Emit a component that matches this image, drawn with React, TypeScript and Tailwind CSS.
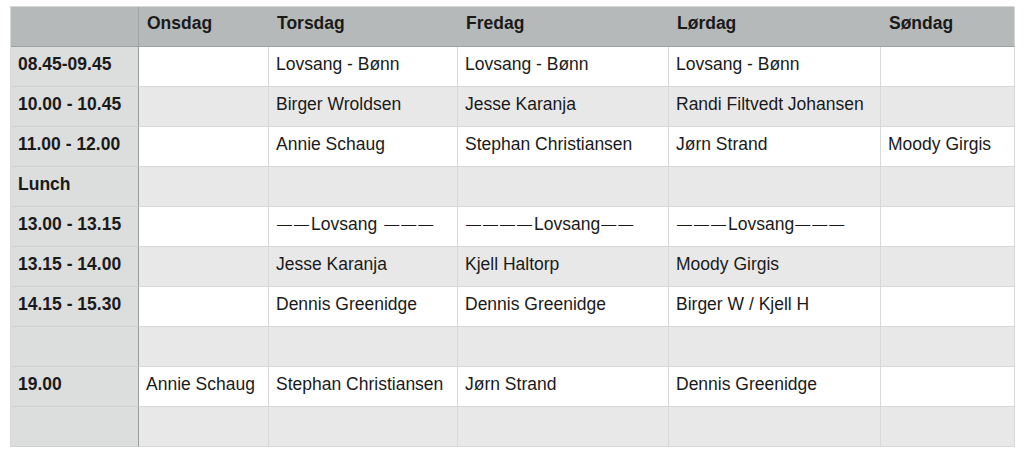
import React from "react";

const days = ["Onsdag", "Torsdag", "Fredag", "Lørdag", "Søndag"];

function Dashes({ n }: { n: number }) {
  return (
    <span className="text-[15px] tracking-[2px] pl-[1px]">
      {"\u2014".repeat(n)}
    </span>
  );
}

const L = (a: number, b: number, space = false) => (
  <>
    <Dashes n={a} />
    Lovsang
    {space ? <span className="inline-block w-[6px]" /> : null}
    <Dashes n={b} />
  </>
);

const rows: [string, React.ReactNode[]][] = [
  ["08.45-09.45", ["", "Lovsang - Bønn", "Lovsang - Bønn", "Lovsang - Bønn", ""]],
  ["10.00 - 10.45", ["", "Birger Wroldsen", "Jesse Karanja", "Randi Filtvedt Johansen", ""]],
  ["11.00 - 12.00", ["", "Annie Schaug", "Stephan Christiansen", "Jørn Strand", "Moody Girgis"]],
  ["Lunch", ["", "", "", "", ""]],
  ["13.00 - 13.15", ["", L(2, 3, true), L(4, 2), L(3, 3), ""]],
  ["13.15 - 14.00", ["", "Jesse Karanja", "Kjell Haltorp", "Moody Girgis", ""]],
  ["14.15 - 15.30", ["", "Dennis Greenidge", "Dennis Greenidge", "Birger W / Kjell H", ""]],
  ["", ["", "", "", "", ""]],
  ["19.00", ["Annie Schaug", "Stephan Christiansen", "Jørn Strand", "Dennis Greenidge", ""]],
  ["", ["", "", "", "", ""]],
];

export default function App() {
  return (
    <div
      className="w-[1024px] h-[453px] bg-white pt-[6px] pl-[10px]"
      style={{ fontFamily: '"Liberation Sans", Arial, sans-serif' }}
    >
      <div className="grid grid-cols-[128px_130px_189px_211px_212px_134px] w-[1004px] text-[17.5px] text-[#1a1a1a] border-l border-t border-[#d6d8d8]">
        <div className="h-[40px] bg-[#b5b9b9] border-b border-r border-[#9fa3a3]" />
        {days.map((d, i) => (
          <div
            key={d}
            className={`h-[40px] bg-[#b5b9b9] border-b border-[#9fa3a3] flex items-center pl-[8px] pb-[6px] font-bold ${i === days.length - 1 ? "border-r border-r-[#d0d2d2]" : ""}`}
          >
            {d}
          </div>
        ))}
        {rows.map(([time, cells], r) => {
          const bg = r % 2 === 0 ? "bg-white" : "bg-[#e8e8e8]";
          return (
            <React.Fragment key={r}>
              <div className="h-[40px] bg-[#dcdddd] border-b border-[#d0d1d1] border-r border-r-[#9a9c9c] flex items-center pl-[7px] pb-[4px] font-bold">
                {time}
              </div>
              {cells.map((c, i) => (
                <div
                  key={i}
                  className={`h-[40px] ${bg} border-b border-r border-[#d8d8d8] flex items-center pl-[7px] pb-[4px] whitespace-nowrap`}
                >
                  {c}
                </div>
              ))}
            </React.Fragment>
          );
        })}
      </div>
    </div>
  );
}
